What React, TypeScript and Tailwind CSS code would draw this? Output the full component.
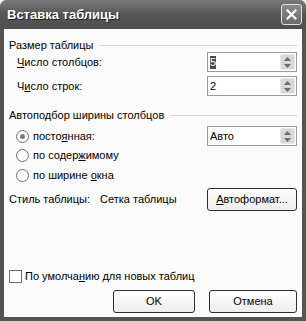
import React from "react";

const font = { fontFamily: '"Liberation Sans", Arial, sans-serif' };

function Spinner() {
  return (
    <div className="w-[15px] h-[16px] mr-[1px] rounded-[2px] bg-[#d8d8d8] border border-[#e8e8e8] flex flex-col items-center justify-center gap-[3px]">
      <svg width="7" height="4" viewBox="0 0 7 4"><path d="M0 4 L3.5 0 L7 4 Z" fill="#6a6a6a" /></svg>
      <svg width="7" height="4" viewBox="0 0 7 4"><path d="M0 0 L3.5 4 L7 0 Z" fill="#6a6a6a" /></svg>
    </div>
  );
}

function SpinInput({ value, selected }: { value: string; selected?: boolean }) {
  return (
    <div className="w-[90px] h-[20px] border border-[#9a9a9a] bg-white flex items-center justify-between">
      <div className="pl-[2px] flex items-center">
        {selected ? (
          <span className="bg-[#4a4a4a] text-white px-[0px] leading-[13px]">{value}</span>
        ) : (
          <span className="leading-[13px]">{value}</span>
        )}
      </div>
      <Spinner />
    </div>
  );
}

function Radio({ checked }: { checked?: boolean }) {
  return (
    <div className="w-[13px] h-[13px] rounded-full border border-[#6e6e6e] bg-white flex items-center justify-center">
      {checked && <div className="w-[5px] h-[5px] rounded-full bg-[#7a7a7a]" />}
    </div>
  );
}

function Btn({ children, w }: { children: React.ReactNode; w: string }) {
  return (
    <div className={`${w} h-[23px] rounded-[3px] border border-[#2e2e2e] bg-gradient-to-b from-white to-[#ededed] flex items-center justify-center`}>
      {children}
    </div>
  );
}

function GroupHeader({ label }: { label: string }) {
  return (
    <div className="h-[14px] flex items-center gap-[6px]">
      <span className="whitespace-nowrap">{label}</span>
      <div className="flex-1 h-[1px] bg-[#d4d4d4]" />
    </div>
  );
}

export default function App() {
  return (
    <div className="w-[306px] h-[321px] bg-[#f0f0f0] text-[11px] text-black" style={font}>
      <div className="w-[306px] h-[321px] flex flex-col rounded-t-[7px] overflow-hidden bg-[#545454]">
        <div className="h-[29px] flex items-center justify-between pl-[7px] pr-[4px] bg-gradient-to-b from-[#7a7a7a] via-[#565656] to-[#4e4e4e]">
          <span className="text-white font-bold text-[13px] [text-shadow:1px_1px_0_#222]">Вставка таблицы</span>
          <div className="w-[21px] h-[21px] rounded-[3px] border border-[#e0e0e0] bg-gradient-to-b from-[#8a8a8a] to-[#6a6a6a] flex items-center justify-center">
            <svg width="11" height="11" viewBox="0 0 11 11">
              <path d="M1.5 1.5 L9.5 9.5 M9.5 1.5 L1.5 9.5" stroke="white" strokeWidth="2.2" strokeLinecap="square" />
            </svg>
          </div>
        </div>
        <div className="flex-1 flex px-[4px] pb-[4px]">
          <div className="flex-1 bg-[#fbfbfb] flex flex-col px-[5px] pt-[9px] pb-[4px]">
            <GroupHeader label="Размер таблицы" />
            <div className="mt-[0px] h-[20px] flex items-center justify-between pl-[8px] pr-[0px]">
              <span><u>Ч</u>исло столбцов:</span>
              <SpinInput value="5" selected />
            </div>
            <div className="mt-[4px] h-[20px] flex items-center justify-between pl-[8px]">
              <span>Ч<u>и</u>сло строк:</span>
              <SpinInput value="2" />
            </div>
            <div className="mt-[12px]">
              <GroupHeader label="Автоподбор ширины столбцов" />
            </div>
            <div className="mt-[4px] h-[20px] flex items-center justify-between pl-[7px]">
              <div className="flex items-center gap-[4px]">
                <Radio checked />
                <span>посто<u>я</u>нная:</span>
              </div>
              <SpinInput value="Авто" />
            </div>
            <div className="h-[18px] flex items-center gap-[4px] pl-[7px]">
              <Radio />
              <span>по содер<u>ж</u>имому</span>
            </div>
            <div className="mt-[2px] h-[18px] flex items-center gap-[4px] pl-[7px]">
              <Radio />
              <span>по ширине <u>о</u>кна</span>
            </div>
            <div className="mt-[4px] h-[23px] flex items-center justify-between">
              <div className="flex items-center">
                <span className="w-[91px]">Стиль таблицы:</span>
                <span>Сетка таблицы</span>
              </div>
              <Btn w="w-[90px]">
                <span><u>А</u>втоформат...</span>
              </Btn>
            </div>
            <div className="flex-1" />
            <div className="h-[14px] flex items-center gap-[3px]">
              <div className="w-[13px] h-[13px] border border-[#6e6e6e] bg-white" />
              <span>По умолча<u>н</u>ию для новых таблиц</span>
            </div>
            <div className="mt-[7px] flex justify-end gap-[14px]">
              <Btn w="w-[82px]">OK</Btn>
              <Btn w="w-[88px]">Отмена</Btn>
            </div>
          </div>
        </div>
      </div>
    </div>
  );
}
